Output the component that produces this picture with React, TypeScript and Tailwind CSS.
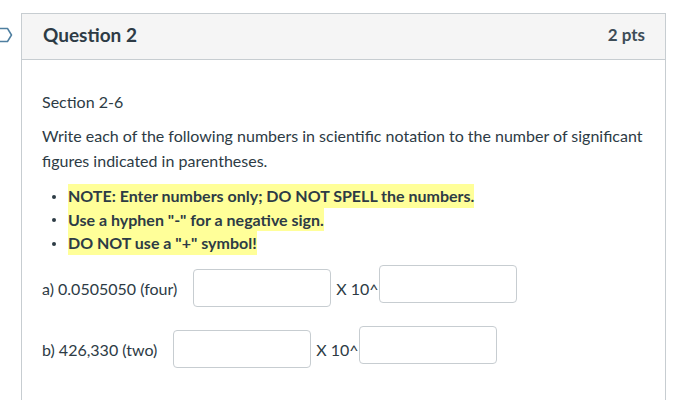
import React from 'react';

function FlagIcon() {
  return (
    <svg width="14" height="16" viewBox="0 0 14 16" className="block">
      <path d="M-4 1.5 H7.5 L11.5 8 L7.5 14.5 H-4" fill="none" stroke="#4f7fa0" strokeWidth="1.5" strokeLinejoin="round" />
    </svg>
  );
}

function Blank({ raised }: { raised?: boolean }) {
  return (
    <input
      type="text"
      className={
        'w-[138px] h-[38px] border border-[#c7cdd1] rounded-[4px] bg-white outline-none ' +
        (raised ? 'self-start' : 'self-end')
      }
    />
  );
}

function Row({ label, gap }: { label: string; gap: string }) {
  return (
    <div className="flex items-stretch h-[42px]">
      <span className={'self-end mb-[6px] ' + gap}>{label}</span>
      <Blank />
      <span className="self-end mb-[6px] ml-[5px]">X 10^</span>
      <Blank raised />
    </div>
  );
}

export default function App() {
  const notes = [
    'NOTE: Enter numbers only; DO NOT SPELL the numbers.',
    'Use a hyphen "-" for a negative sign.',
    'DO NOT use a "+" symbol!',
  ];
  return (
    <div
      className="w-[686px] h-[400px] overflow-hidden bg-white text-[#2d3b45] flex"
      style={{ fontFamily: 'Lato, "Noto Sans", sans-serif' }}
    >
      <div className="w-[21px] shrink-0 pt-[27px]">
        <FlagIcon />
      </div>
      <div className="mt-[13px] w-[645px] border border-[#c7cdd1] border-b-0 flex flex-col">
        <div className="h-[46px] bg-[#f5f5f5] border-b border-[#c7cdd1] flex items-center justify-between pl-[21px] pr-[20px] pb-[3px]">
          <span className="text-[19px] font-bold">Question 2</span>
          <span className="text-[17px] font-bold text-[#3d4c57]">2 pts</span>
        </div>
        <div className="pl-[20px] pr-[20px] pt-[29px] text-[16px] leading-[25px]">
          <p>Section 2-6</p>
          <p className="mt-[9px]">
            Write each of the following numbers in scientific notation to the number of significant figures
            indicated in parentheses.
          </p>
          <ul className="mt-[11px] pl-[10px] font-bold leading-[23.5px]">
            {notes.map(n => (
              <li key={n} className="flex items-center">
                <span className="w-[4px] h-[4px] rounded-full bg-[#2d3b45] mr-[12px] mt-[2px]" />
                <span className="bg-[#ffff99]">{n}</span>
              </li>
            ))}
          </ul>
          <div className="mt-[10px]">
            <Row label="a) 0.0505050 (four)" gap="mr-[16px]" />
          </div>
          <div className="mt-[19px]">
            <Row label="b) 426,330 (two)" gap="mr-[16px]" />
          </div>
        </div>
      </div>
    </div>
  );
}
